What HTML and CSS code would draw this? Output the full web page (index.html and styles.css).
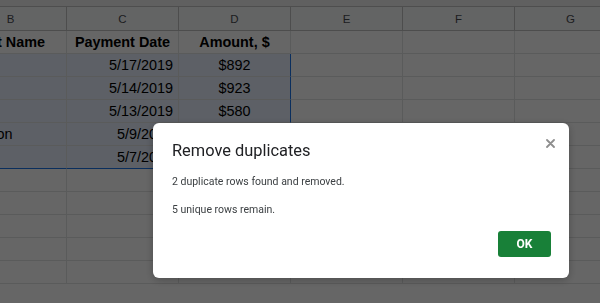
FILE: index.html
```html
<!DOCTYPE html>
<html lang="en">
<head>
    <meta charset="UTF-8">
    <title>Remove duplicates</title>
    <link rel="stylesheet" href="styles.css">
</head>
<body>
    <div class="toolbar"></div>
    <div class="sheet">
        <div class="col-head">B</div>
        <div class="col-head">C</div>
        <div class="col-head">D</div>
        <div class="col-head">E</div>
        <div class="col-head">F</div>
        <div class="col-head">G</div>

        <div class="cell bold name-head">Client Name</div>
        <div class="cell bold center">Payment Date</div>
        <div class="cell bold center">Amount, $</div>
        <div class="cell"></div><div class="cell"></div><div class="cell"></div>

        <div class="cell sel"></div>
        <div class="cell sel right">5/17/2019</div>
        <div class="cell sel center edge-r">$892</div>
        <div class="cell"></div><div class="cell"></div><div class="cell"></div>

        <div class="cell sel"></div>
        <div class="cell sel right">5/14/2019</div>
        <div class="cell sel center edge-r">$923</div>
        <div class="cell"></div><div class="cell"></div><div class="cell"></div>

        <div class="cell sel"></div>
        <div class="cell sel right">5/13/2019</div>
        <div class="cell sel center edge-r">$580</div>
        <div class="cell"></div><div class="cell"></div><div class="cell"></div>

        <div class="cell sel name">Johnson</div>
        <div class="cell sel right">5/9/2019</div>
        <div class="cell sel center edge-r">$892</div>
        <div class="cell"></div><div class="cell"></div><div class="cell"></div>

        <div class="cell sel edge-b"></div>
        <div class="cell sel edge-b right">5/7/2019</div>
        <div class="cell sel edge-b center edge-r">$923</div>
        <div class="cell"></div><div class="cell"></div><div class="cell"></div>

        <div class="cell"></div><div class="cell"></div><div class="cell"></div><div class="cell"></div><div class="cell"></div><div class="cell"></div>
        <div class="cell"></div><div class="cell"></div><div class="cell"></div><div class="cell"></div><div class="cell"></div><div class="cell"></div>
        <div class="cell"></div><div class="cell"></div><div class="cell"></div><div class="cell"></div><div class="cell"></div><div class="cell"></div>
        <div class="cell"></div><div class="cell"></div><div class="cell"></div><div class="cell"></div><div class="cell"></div><div class="cell"></div>
        <div class="cell"></div><div class="cell"></div><div class="cell"></div><div class="cell"></div><div class="cell"></div><div class="cell"></div>
    </div>

    <div class="overlay"></div>

    <div class="dialog">
        <button class="close" aria-label="Close">
            <svg width="9" height="9" viewBox="0 0 9 9">
                <path d="M1 1 L8 8 M8 1 L1 8" stroke="#8e8e8e" stroke-width="1.8" stroke-linecap="round"/>
            </svg>
        </button>
        <h2>Remove duplicates</h2>
        <p>2 duplicate rows found and removed.</p>
        <p>5 unique rows remain.</p>
        <div class="actions">
            <button class="ok">OK</button>
        </div>
    </div>
</body>
</html>
```

FILE: styles.css
```css
body {
    margin: 0;
    width: 600px;
    height: 303px;
    overflow: hidden;
    background: #ffffff;
    font-family: 'Liberation Sans', Arial, sans-serif;
}
.toolbar {
    height: 7px;
    background: #f1f1f1;
    border-bottom: 1px solid #c4c4c4;
    box-sizing: border-box;
}
.sheet {
    display: grid;
    grid-template-columns: repeat(6, 112px);
    grid-template-rows: 24px repeat(11, 23px);
    margin-left: -45px;
}
.col-head {
    background: #f8f9fa;
    color: #4a4d52;
    font-size: 11.5px;
    display: flex;
    align-items: center;
    justify-content: center;
    border-right: 1px solid #c0c0c0;
    border-bottom: 1px solid #c0c0c0;
    box-sizing: border-box;
}
.cell {
    border-right: 1px solid #e2e3e3;
    border-bottom: 1px solid #e2e3e3;
    box-sizing: border-box;
    font-size: 14.4px;
    color: #000;
    padding: 0 5px;
    display: flex;
    align-items: center;
    white-space: nowrap;
    overflow: visible;
}
.cell.bold {
    font-weight: bold;
}
.cell.right {
    justify-content: flex-end;
}
.cell.center {
    justify-content: center;
}
.cell.name-head {
    justify-content: flex-end;
    padding-right: 21px;
}
.cell.name {
    padding-left: 3px;
}
.cell.sel {
    background: #e8f0fe;
}
.cell.edge-r {
    border-right: 1px solid #1a73e8;
}
.cell.edge-b {
    border-bottom: 1px solid #1a73e8;
}
.overlay {
    position: fixed;
    inset: 0;
    background: rgba(0, 0, 0, 0.6);
}
.dialog {
    position: fixed;
    left: 153px;
    top: 123px;
    width: 416px;
    height: 155px;
    box-sizing: border-box;
    background: #ffffff;
    border-radius: 6px;
    box-shadow: 0 2px 8px rgba(0, 0, 0, 0.25);
    padding: 18px 19px 0;
    font-family: Roboto, 'Liberation Sans', sans-serif;
}
.dialog h2 {
    margin: 0 0 14px;
    font-size: 16.4px;
    font-weight: 400;
    color: #202124;
    line-height: 20px;
}
.dialog p {
    margin: 0 0 15px;
    font-size: 10.5px;
    line-height: 13px;
    color: #3c4043;
}
.close {
    position: absolute;
    top: 12px;
    right: 11px;
    width: 16px;
    height: 16px;
    padding: 0;
    border: none;
    background: none;
    display: flex;
    align-items: center;
    justify-content: center;
}
.actions {
    display: flex;
    justify-content: flex-end;
    margin-top: 15px;
}
.ok {
    width: 53px;
    height: 26px;
    border: none;
    border-radius: 3px;
    background: #188038;
    color: #ffffff;
    font-family: Roboto, 'Liberation Sans', sans-serif;
    font-weight: 700;
    font-size: 12px;
    margin-right: -1px;
}
```
